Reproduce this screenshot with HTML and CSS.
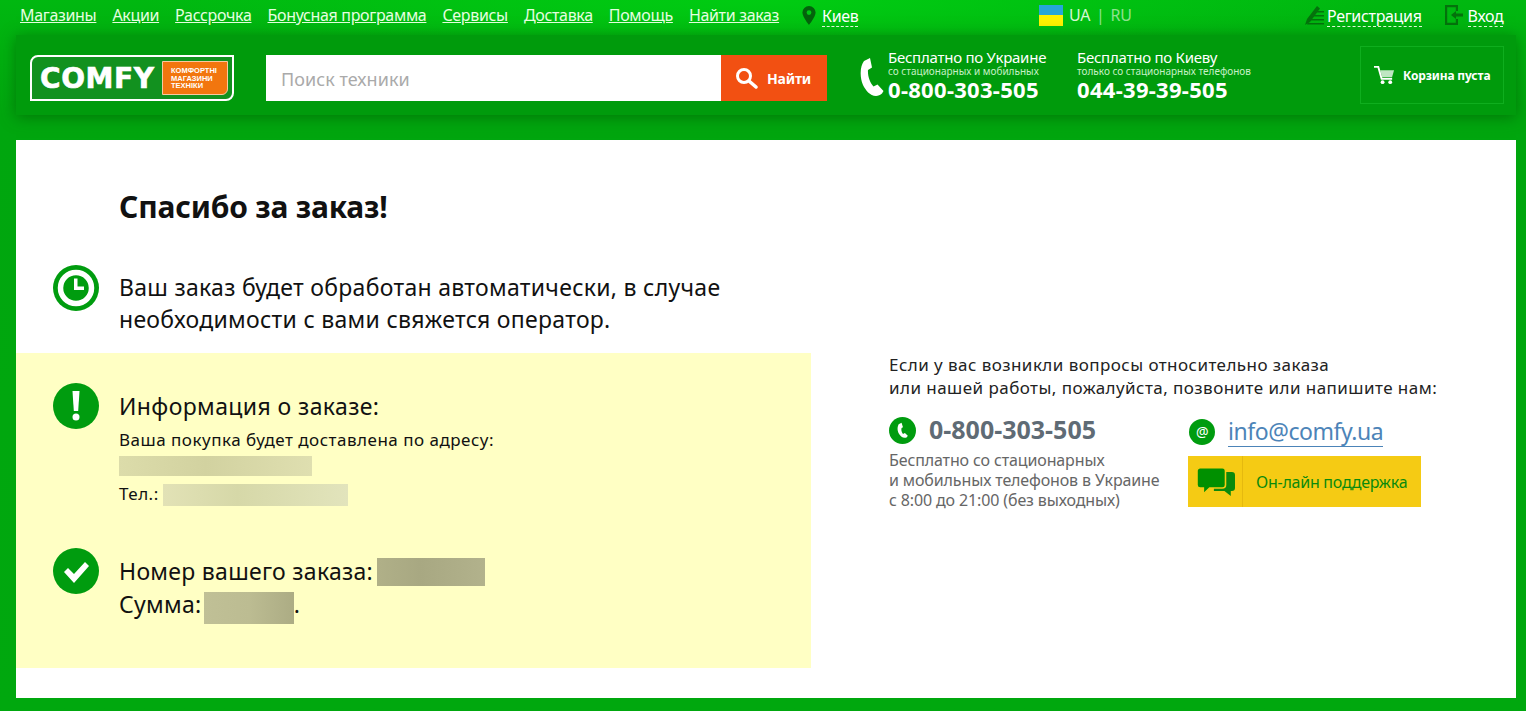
FILE: index.html
```html
<!DOCTYPE html>
<html lang="ru">
<head>
    <meta charset="UTF-8">
    <title>Спасибо за заказ</title>
    <link rel="stylesheet" href="styles.css">
</head>
<body>
    <nav class="topbar">
        <div class="toplinks">
            <a href="#">Магазины</a>
            <a href="#">Акции</a>
            <a href="#">Рассрочка</a>
            <a href="#">Бонусная программа</a>
            <a href="#">Сервисы</a>
            <a href="#">Доставка</a>
            <a href="#">Помощь</a>
            <a href="#">Найти заказ</a>
        </div>
        <div class="city">
            <svg width="14" height="19" viewBox="0 0 14 19"><path fill="#04620c" fill-rule="evenodd" d="M7 0a6.6 6.6 0 0 1 6.6 6.6C13.600 11 7 19 7 19S.4 11 .4 6.600A6.600 6.600 0 0 1 7 0zm0 4.200a2.400 2.400 0 1 0 0 4.800 2.400 2.400 0 0 0 0-4.800z"/></svg>
            <span class="dashed">Киев</span>
        </div>
        <div class="lang">
            <span class="flag"></span>
            <span>UA</span><span class="sep">|</span><span class="lang-off">RU</span>
        </div>
        <div class="account">
            <svg width="19" height="21" viewBox="0 0 19 21"><path fill="#04720c" d="M0 20 2 14 12 1l3 2.500L5 17zM11 6h8v1.500H9.800zM8.500 10H19v1.500H7.300zM6 14h13v1.500H4.800zM3 18h16v1.500H2z"/></svg>
            <span class="dashed">Регистрация</span>
            <svg class="enter-icon" width="18" height="20" viewBox="0 0 18 20"><path fill="#04720c" d="M0 0h13v6h-2.200V2.200H2.200v15.600h8.600V14H13v6H0zM6 10l5-4v2.500h7v3h-7V14z"/></svg>
            <span class="dashed">Вход</span>
        </div>
    </nav>

    <header class="header">
        <a class="logo" href="#">
            <span class="logo-name">COMFY</span>
            <span class="logo-badge">КОМФОРТНІ<br>МАГАЗИНИ<br>ТЕХНІКИ</span>
        </a>
        <form class="search">
            <input class="search-input" type="text" placeholder="Поиск техники">
            <button class="search-btn" type="button">
                <svg width="23" height="22" viewBox="0 0 23 22"><circle cx="9" cy="9" r="6.500" fill="none" stroke="#fff" stroke-width="3"/><path d="M14 14l7 6" stroke="#fff" stroke-width="3.500" stroke-linecap="round"/></svg>
                Найти
            </button>
        </form>
        <svg class="phone-icon" width="25" height="40" viewBox="0 0 25 40"><path fill="#fff" d="M10 1 4 4C0 9-.5 20 3 28c2.500 5 7 11 13 11 2 0 4.500-1 6-2.500l1.500-2.500-6-6.500-4 2C10 26 7.500 19 8 13l4-2.500z"/></svg>
        <div class="phone phone-ua">
            <div class="phone-title">Бесплатно по Украине</div>
            <div class="phone-note">со стационарных и мобильных</div>
            <div class="phone-num">0-800-303-505</div>
        </div>
        <div class="phone phone-kiev">
            <div class="phone-title">Бесплатно по Киеву</div>
            <div class="phone-note">только со стационарных телефонов</div>
            <div class="phone-num">044-39-39-505</div>
        </div>
        <a class="cart" href="#">
            <svg width="21" height="20" viewBox="0 0 22 20"><path fill="none" stroke="#fff" stroke-width="2" d="M0 1.500h4.500L8 14h11"/><path fill="#fff" opacity=".75" d="M6.500 5H21l-2 7H8.500z"/><circle cx="9" cy="17.500" r="2" fill="#fff"/><circle cx="17" cy="17.500" r="2" fill="#fff"/></svg>
            <span>Корзина пуста</span>
        </a>
    </header>

    <main class="card">
        <section class="left">
            <h1>Спасибо за заказ!</h1>
            <div class="row row-auto">
                <svg class="icon" width="46" height="46" viewBox="0 0 46 46"><circle cx="23" cy="23" r="23" fill="#009c0f"/><circle cx="23" cy="23" r="15.500" fill="none" stroke="#fff" stroke-width="5.500"/><path d="M21 13.500h3.500v8H31V25H21z" fill="#fff"/></svg>
                <p class="big">Ваш заказ будет обработан автоматически, в случае<br>необходимости с вами свяжется оператор.</p>
            </div>
            <div class="info">
                <div class="row">
                    <svg class="icon" width="46" height="46" viewBox="0 0 46 46"><circle cx="23" cy="23" r="23" fill="#009c0f"/><path d="M19.500 8h7l-1.300 20h-4.400z" fill="#fff"/><circle cx="23" cy="34" r="3.500" fill="#fff"/></svg>
                    <div>
                        <h2>Информация о заказе:</h2>
                        <p class="small">Ваша покупка будет доставлена по адресу:</p>
                        <div class="blur blur-addr"></div>
                        <p class="small tel">Тел.: <span class="blur blur-tel"></span></p>
                    </div>
                </div>
                <div class="row row-order">
                    <svg class="icon" width="46" height="46" viewBox="0 0 46 46"><circle cx="23" cy="23" r="23" fill="#009c0f"/><path d="M11 24l4-4 6 6 11-12 4 4-15 17z" fill="#fff"/></svg>
                    <div class="big">
                        <div class="order-line">Номер вашего заказа: <span class="blur blur-num"></span></div>
                        <div class="order-line">Сумма: <span class="blur blur-sum"></span>.</div>
                    </div>
                </div>
            </div>
        </section>
        <aside class="right">
            <p class="ask">Если у вас возникли вопросы относительно заказа<br>или нашей работы, пожалуйста, позвоните или напишите нам:</p>
            <div class="contacts">
                <div class="contact-phone">
                    <div class="contact-num">
                        <svg width="27" height="27" viewBox="0 0 28 28"><circle cx="14" cy="14" r="14" fill="#009c0f"/><path fill="#fff" d="M13 6 10 7.500c-2 4-1.500 9 3 13 1.500 1.300 4 1.500 5.500.5l1-1.500-3-3-2 1c-1.500-1.500-2-4-1.500-6l1.500-1z"/></svg>
                        <span class="contact-digits">0-800-303-505</span>
                    </div>
                    <p class="contact-note">Бесплатно со стационарных<br>и мобильных телефонов в Украине<br>с 8:00 до 21:00 (без выходных)</p>
                </div>
                <div class="contact-mail">
                    <div class="mail-row">
                        <span class="at">@</span>
                        <a href="#">info@comfy.ua</a>
                    </div>
                    <a class="support" href="#">
                        <span class="support-icon">
                            <svg width="38" height="30" viewBox="0 0 36 30" preserveAspectRatio="none"><path fill="#0a8a0c" d="M16 5h17a3 3 0 0 1 3 3v13a3 3 0 0 1-3 3h-1v5l-6-5H16z"/><path fill="#009000" stroke="#f5cb14" stroke-width="1.500" d="M3 .8h21a3 3 0 0 1 3 3V18a3 3 0 0 1-3 3H12l-6 6v-6H3a3 3 0 0 1-3-3V3.800a3 3 0 0 1 3-3z"/></svg>
                        </span>
                        <span class="support-text">Он-лайн поддержка</span>
                    </a>
                </div>
            </div>
        </aside>
    </main>
</body>
</html>
```

FILE: styles.css
```css
body {
    margin: 0;
    height: 711px;
    overflow: hidden;
    background: radial-gradient(ellipse 620px 60px at 50% 0, #00cc12, rgba(0, 204, 18, 0)), linear-gradient(#00b810 0, #00a60e 115px, #00a80e 100%);
    font-family: "Noto Sans", Arial, sans-serif;
    color: #111;
}
p, h1, h2 {
    margin: 0;
    font-weight: normal;
}
a {
    color: inherit;
}
svg {
    flex: none;
    display: block;
}

/* top bar */
.topbar {
    display: flex;
    align-items: center;
    height: 30px;
    padding-left: 20px;
    color: #fff;
    font-size: 16px;
    letter-spacing: -0.33px;
}
.toplinks {
    display: flex;
    gap: 16px;
    width: 782px;
}
.toplinks a {
    color: #e6ffe0;
}
.city {
    display: flex;
    align-items: center;
    gap: 6px;
    width: 237px;
}
.dashed {
    border-bottom: 1px dashed #e6ffe0;
    line-height: 20px;
    margin-top: 3px;
}
.lang {
    display: flex;
    align-items: center;
    gap: 6px;
    width: 266px;
    color: #d8f7d4;
}
.flag {
    width: 24px;
    height: 21px;
    background: linear-gradient(#26a6d8 50%, #fff200 50%);
}
.sep, .lang-off {
    color: #8fe28f;
}
.account {
    display: flex;
    align-items: center;
    gap: 3px;
}
.enter-icon {
    margin-left: 20px;
    margin-right: 2px;
}

/* header */
.header {
    display: flex;
    align-items: center;
    position: relative;
    height: 80px;
    margin: 5px 10px 0 16px;
    padding-left: 14px;
    background: #009b0c;
    box-shadow: 0 2px 14px rgba(0, 80, 0, 0.55);
    color: #fff;
}
.logo {
    display: flex;
    align-items: center;
    gap: 7px;
    box-sizing: border-box;
    width: 204px;
    height: 46px;
    margin-top: 6px;
    padding-left: 8px;
    background: #12911f;
    border: 2px solid #fff;
    border-radius: 8px 0 8px 0;
    text-decoration: none;
}
.logo-name {
    font-family: "DejaVu Sans", sans-serif;
    font-weight: bold;
    font-size: 28px;
    letter-spacing: 0.6px;
    width: 115px;
    -webkit-text-stroke: 0.6px #fff;
}
.logo-badge {
    box-sizing: border-box;
    width: 66px;
    height: 34px;
    padding: 5px 0 0 8px;
    background: #f2760e;
    border: 1px solid #f9c9a0;
    border-radius: 0 0 6px 0;
    font-family: "Liberation Sans", sans-serif;
    font-weight: bold;
    font-size: 7.500px;
    line-height: 7.500px;
}
.search {
    display: flex;
    margin-top: 6px;
    margin-left: 32px;
}
.search-input {
    box-sizing: border-box;
    width: 455px;
    height: 46px;
    padding: 2px 15px 0;
    border: none;
    border-radius: 0;
    font-family: inherit;
    font-size: 18px;
    letter-spacing: 0.05px;
}
.search-input::placeholder {
    color: #aaa;
    opacity: 1;
}
.search-btn {
    display: flex;
    align-items: center;
    gap: 9px;
    width: 106px;
    height: 46px;
    padding: 0 0 0 14px;
    border: none;
    background: #f25012;
    color: #fff;
    font-family: inherit;
    font-size: 14px;
    font-weight: bold;
    letter-spacing: -0.2px;
}
.phone-icon {
    margin-top: 4px;
    margin-left: 33px;
    margin-right: 3px;
}
.phone {
    line-height: 1;
}
.phone-ua {
    width: 189px;
}
.phone-kiev {
    width: 283px;
}
.phone-title {
    font-size: 15px;
    letter-spacing: -0.25px;
    line-height: 17px;
}
.phone-note {
    font-size: 10px;
    letter-spacing: 0;
    line-height: 11px;
    color: #c6f0c6;
}
.phone-num {
    font-size: 22px;
    font-weight: bold;
    letter-spacing: 0.3px;
    line-height: 25px;
}
.cart {
    display: flex;
    align-items: center;
    gap: 8px;
    box-sizing: border-box;
    width: 144px;
    height: 58px;
    padding-left: 13px;
    border: 1px solid #0fae1e;
    font-size: 12px;
    font-weight: bold;
    letter-spacing: -0.15px;
    text-decoration: none;
}

/* page card */
.card {
    display: flex;
    height: 558px;
    margin: 25px 10px 0 16px;
    background: #fff;
}
.left {
    width: 795px;
}
.left h1 {
    padding: 47px 0 0 103px;
    font-size: 30px;
    font-weight: bold;
    line-height: 40px;
    letter-spacing: -0.2px;
}
.row {
    display: flex;
    gap: 20px;
    padding-left: 37px;
}
.row-auto {
    margin-top: 37px;
    height: 89px;
}
.row-auto .icon {
    margin-top: 1px;
}
.big {
    font-size: 23px;
    line-height: 32px;
    letter-spacing: 0.29px;
    margin-top: 7px;
}
.info {
    box-sizing: border-box;
    height: 315px;
    padding-top: 30px;
    background: #ffffc4;
}
.info h2 {
    font-size: 23px;
    line-height: 30px;
    letter-spacing: 0.4px;
    margin-top: 8px;
}
.small {
    font-size: 17px;
    line-height: 26px;
    letter-spacing: 0.5px;
    margin-top: 6px;
}
.blur {
    display: inline-block;
    vertical-align: middle;
}
.blur-addr {
    display: block;
    width: 193px;
    height: 20px;
    margin-top: 3px;
    background: linear-gradient(90deg, #dcdcaa, #d2d2a0 45%, #dfdfb0);
}
.tel {
    margin-top: 5px;
}
.blur-tel {
    width: 185px;
    height: 22px;
    margin-left: -1px;
    background: linear-gradient(90deg, #e2e2b6, #d6d8a8 40%, #e2e4bc);
}
.row-order {
    margin-top: 41px;
}
.row-order .big {
    margin-top: 7px;
}
.order-line {
    height: 33px;
    line-height: 33px;
}
.blur-num {
    width: 108px;
    height: 28px;
    margin-left: -2px;
    vertical-align: -6px;
    background: linear-gradient(90deg, #b0b088, #a8a882 40%, #b2b28c);
}
.blur-sum {
    width: 90px;
    height: 32px;
    margin-left: -4px;
    vertical-align: -11px;
    background: linear-gradient(90deg, #c0c096, #bcbc92 50%, #acac84);
}

/* contacts */
.right {
    padding: 213px 0 0 78px;
    color: #222;
}
.ask {
    font-size: 17px;
    line-height: 23px;
    letter-spacing: 0.45px;
}
.contacts {
    display: flex;
    margin-top: 17px;
}
.contact-phone {
    width: 299px;
}
.contact-num {
    display: flex;
    align-items: center;
    gap: 13px;
    height: 28px;
    color: #5f6b75;
    font-size: 25px;
    font-weight: bold;
    line-height: 28px;
}
.contact-digits {
    margin-top: -3px;
}
.contact-note {
    margin-top: 6px;
    color: #666;
    font-size: 16px;
    line-height: 20px;
    letter-spacing: -0.13px;
}
.mail-row {
    display: flex;
    align-items: center;
    gap: 13px;
    padding-left: 1px;
    height: 30px;
    margin-top: 1px;
    color: #4c84b8;
    font-size: 23px;
    letter-spacing: -0.45px;
}
.mail-row a {
    text-decoration: none;
    border-bottom: 1px solid #4c84b8;
    line-height: 29px;
}
.at {
    width: 26px;
    height: 26px;
    border-radius: 50%;
    background: #009c0f;
    color: #fff;
    font-size: 14px;
    line-height: 25px;
    text-align: center;
}
.support {
    display: flex;
    align-items: center;
    width: 233px;
    height: 51px;
    margin-top: 9px;
    background: #f5cb14;
    color: #0a8a0c;
    font-size: 16px;
    letter-spacing: -0.25px;
    text-decoration: none;
}
.support-icon {
    box-sizing: border-box;
    width: 55px;
    height: 51px;
    padding: 11px 0 0 9px;
    border-right: 1px solid #e5b90f;
}
.support-text {
    margin-left: 13px;
}
```
